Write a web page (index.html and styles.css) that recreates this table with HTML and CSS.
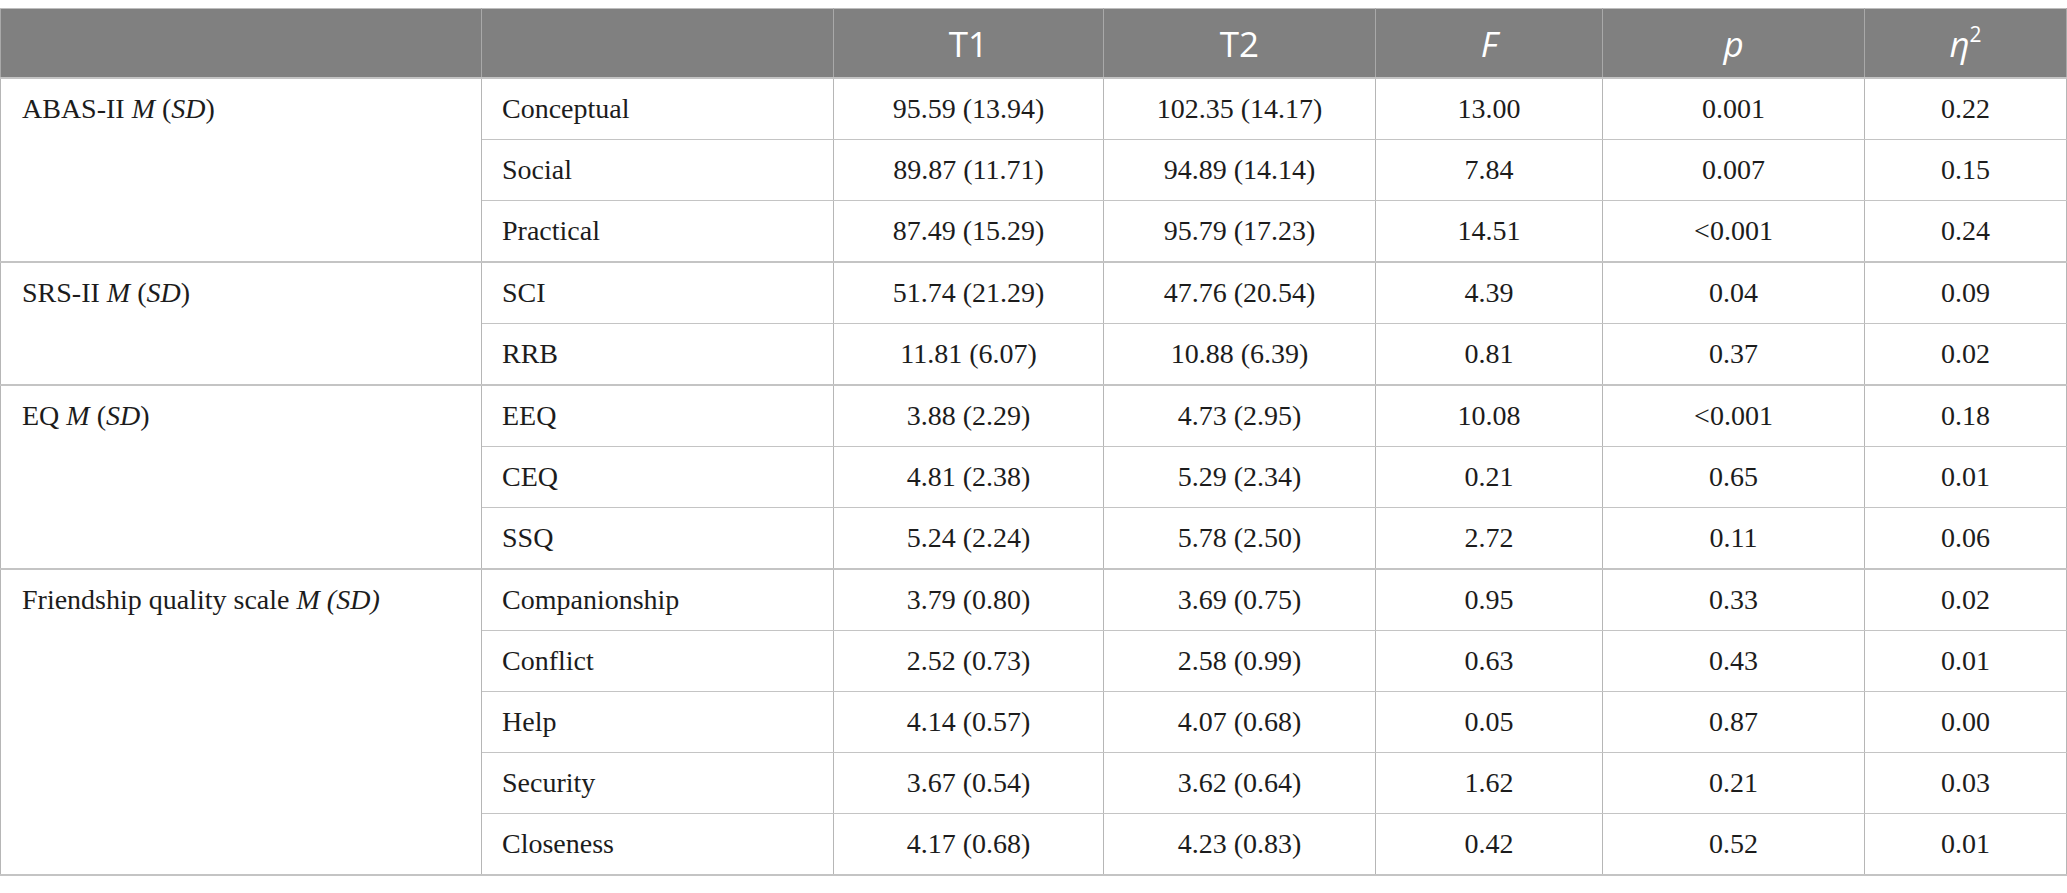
FILE: index.html
```html
<!DOCTYPE html>
<html lang="en">
<head>
<meta charset="utf-8">
<title>Table</title>
<link rel="stylesheet" href="styles.css">
</head>
<body>
<table class="data">
  <colgroup>
    <col class="c-group"><col class="c-sub"><col class="c-t1"><col class="c-t2"><col class="c-f"><col class="c-p"><col class="c-eta">
  </colgroup>
  <thead>
    <tr>
      <th></th>
      <th></th>
      <th>T1</th>
      <th>T2</th>
      <th><i>F</i></th>
      <th><i>p</i></th>
      <th><i>η</i><sup>2</sup></th>
    </tr>
  </thead>
  <tbody>
    <tr class="first">
      <td class="group" rowspan="3">ABAS-II <i>M</i> (<i>SD</i>)</td>
      <td class="sub">Conceptual</td><td>95.59 (13.94)</td><td>102.35 (14.17)</td><td>13.00</td><td>0.001</td><td>0.22</td>
    </tr>
    <tr><td class="sub">Social</td><td>89.87 (11.71)</td><td>94.89 (14.14)</td><td>7.84</td><td>0.007</td><td>0.15</td></tr>
    <tr><td class="sub">Practical</td><td>87.49 (15.29)</td><td>95.79 (17.23)</td><td>14.51</td><td>&lt;0.001</td><td>0.24</td></tr>
    <tr class="first">
      <td class="group" rowspan="2">SRS-II <i>M</i> (<i>SD</i>)</td>
      <td class="sub">SCI</td><td>51.74 (21.29)</td><td>47.76 (20.54)</td><td>4.39</td><td>0.04</td><td>0.09</td>
    </tr>
    <tr><td class="sub">RRB</td><td>11.81 (6.07)</td><td>10.88 (6.39)</td><td>0.81</td><td>0.37</td><td>0.02</td></tr>
    <tr class="first">
      <td class="group" rowspan="3">EQ <i>M</i> (<i>SD</i>)</td>
      <td class="sub">EEQ</td><td>3.88 (2.29)</td><td>4.73 (2.95)</td><td>10.08</td><td>&lt;0.001</td><td>0.18</td>
    </tr>
    <tr><td class="sub">CEQ</td><td>4.81 (2.38)</td><td>5.29 (2.34)</td><td>0.21</td><td>0.65</td><td>0.01</td></tr>
    <tr><td class="sub">SSQ</td><td>5.24 (2.24)</td><td>5.78 (2.50)</td><td>2.72</td><td>0.11</td><td>0.06</td></tr>
    <tr class="first">
      <td class="group" rowspan="5">Friendship quality scale <i>M (SD)</i></td>
      <td class="sub">Companionship</td><td>3.79 (0.80)</td><td>3.69 (0.75)</td><td>0.95</td><td>0.33</td><td>0.02</td>
    </tr>
    <tr><td class="sub">Conflict</td><td>2.52 (0.73)</td><td>2.58 (0.99)</td><td>0.63</td><td>0.43</td><td>0.01</td></tr>
    <tr><td class="sub">Help</td><td>4.14 (0.57)</td><td>4.07 (0.68)</td><td>0.05</td><td>0.87</td><td>0.00</td></tr>
    <tr><td class="sub">Security</td><td>3.67 (0.54)</td><td>3.62 (0.64)</td><td>1.62</td><td>0.21</td><td>0.03</td></tr>
    <tr><td class="sub">Closeness</td><td>4.17 (0.68)</td><td>4.23 (0.83)</td><td>0.42</td><td>0.52</td><td>0.01</td></tr>
  </tbody>
</table>
</body>
</html>
```
FILE: styles.css
```css
html, body {
  margin: 0;
  padding: 0;
  background: #ffffff;
}

body {
  padding-top: 8px;
}

.data {
  border-collapse: collapse;
  table-layout: fixed;
  width: 2066px;
  font-family: "Liberation Serif", "Times New Roman", serif;
  font-size: 28px;
  color: #1c1c1c;
}

.c-group { width: 481px; }
.c-sub { width: 352px; }
.c-t1 { width: 270px; }
.c-t2 { width: 272px; }
.c-f { width: 227px; }
.c-p { width: 262px; }
.c-eta { width: 202px; }

.data th {
  background: #808080;
  color: #ffffff;
  font-family: "Open Sans", "Noto Sans", sans-serif;
  font-weight: 400;
  font-size: 35px;
  line-height: 48px;
  padding: 11px 20px 9px;
  text-align: center;
  border: 1px solid #a9a9a9;
  border-top-color: #bdbdbd;
}

.data th sup {
  font-size: 21px;
  line-height: 0;
  vertical-align: 15px;
}

.data td {
  line-height: 36px;
  padding: 12px 20px;
  text-align: center;
  vertical-align: middle;
  border-left: 1px solid #b6b6b6;
  border-right: 1px solid #b6b6b6;
  border-top: 1px solid #c4c4c4;
  border-bottom: 1px solid #c4c4c4;
  white-space: nowrap;
}

.data td.group {
  text-align: left;
  vertical-align: top;
  padding-left: 21px;
}

.data td.sub {
  text-align: left;
}

.data tr.first td {
  border-top: 2px solid #c4c4c4;
}

.data tbody tr:last-child td,
.data td.group[rowspan="5"] {
  border-bottom: 2px solid #c4c4c4;
}
```
